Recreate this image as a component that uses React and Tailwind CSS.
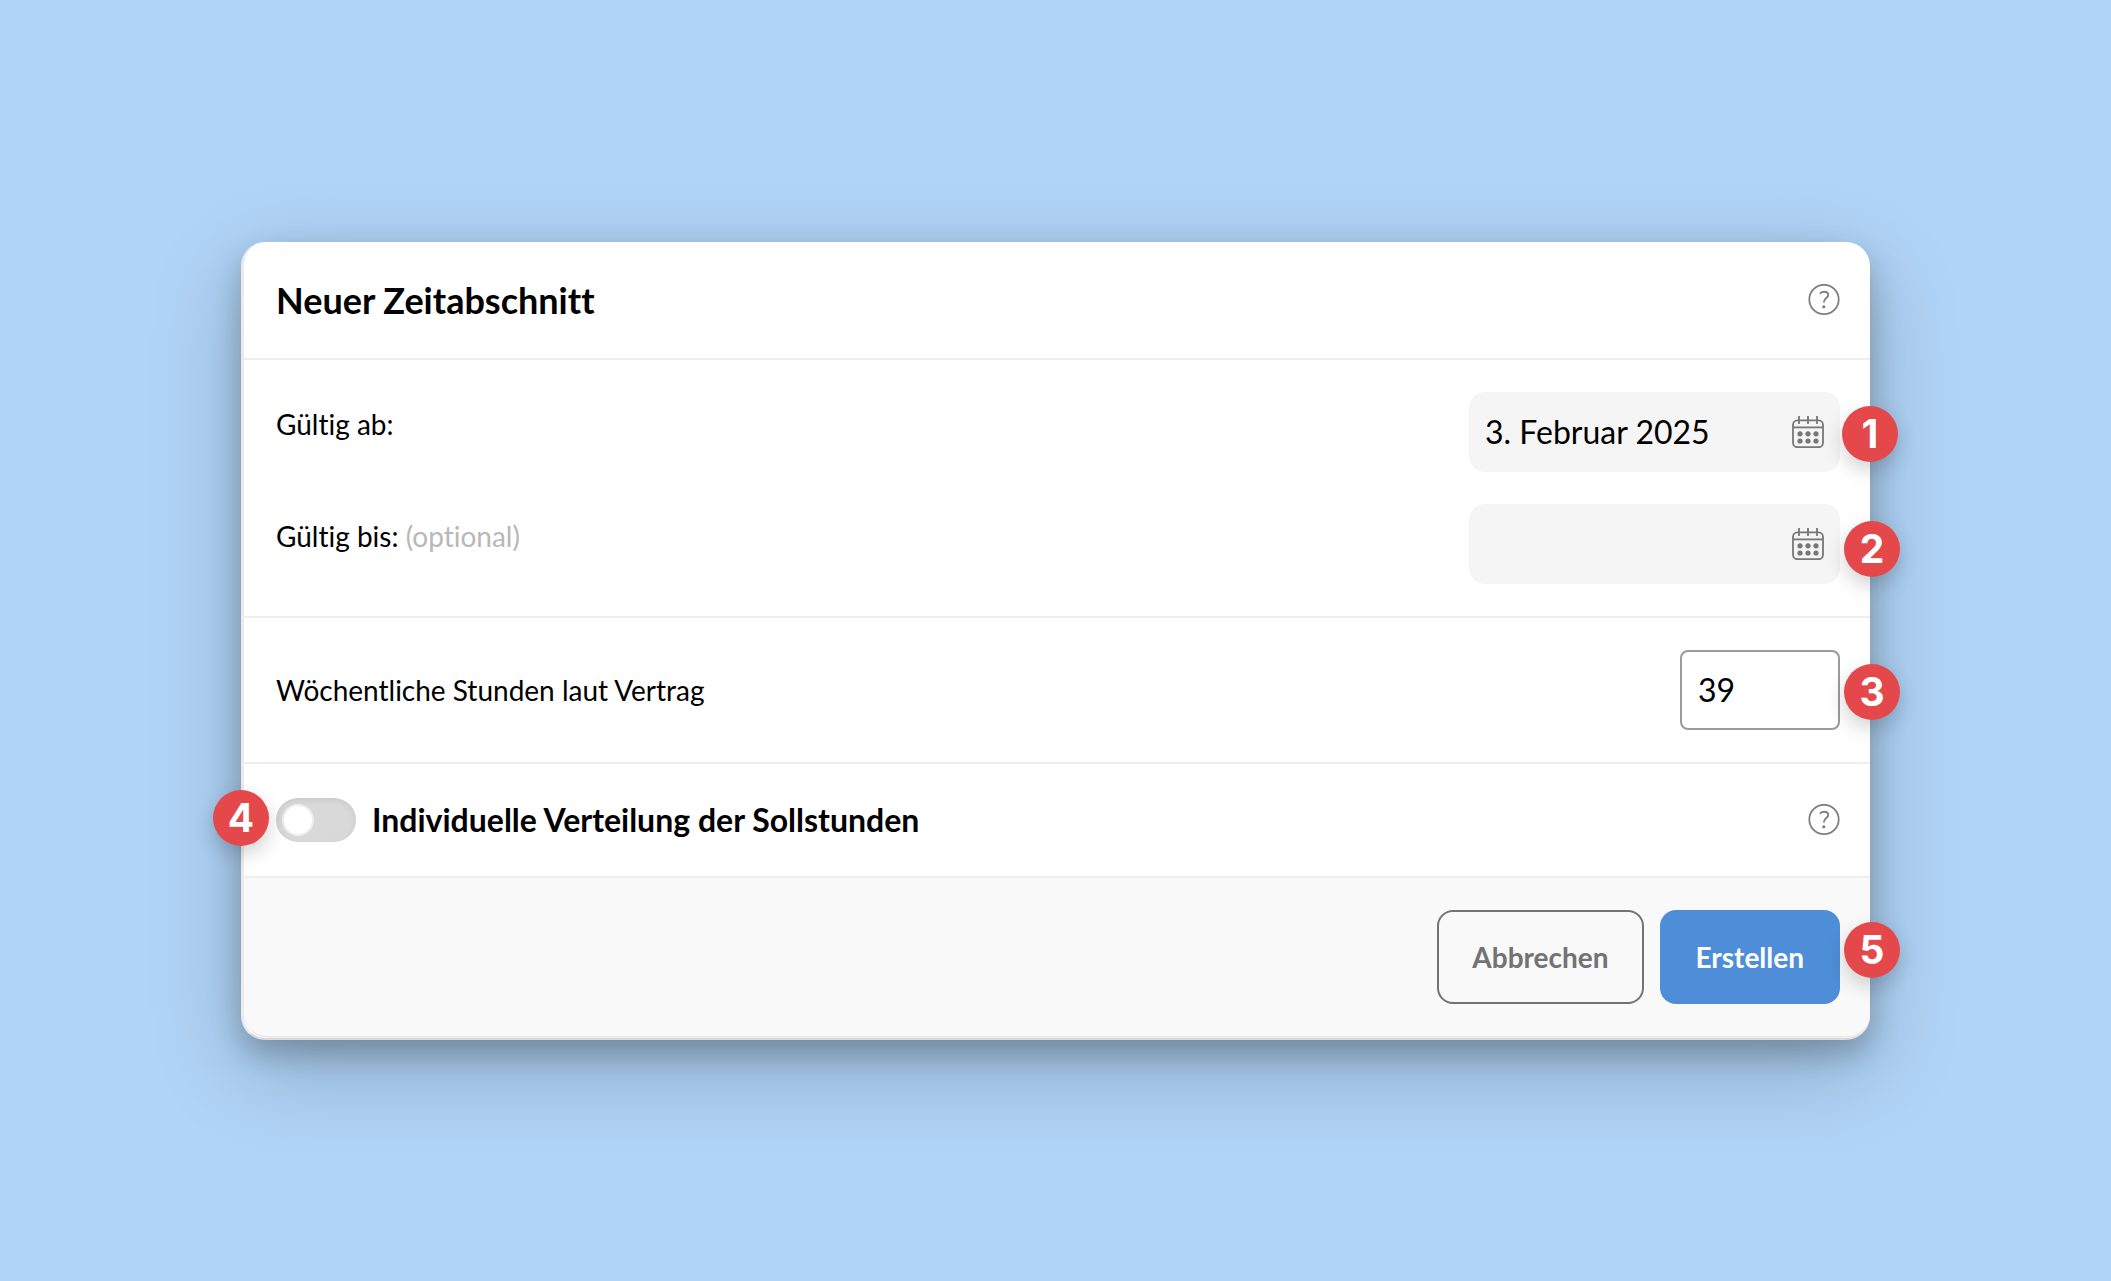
import React, { useState } from 'react';

const Badge = ({ children, className }) => (
  <span
    className={`absolute flex size-14 items-center justify-center rounded-full bg-[#e5484b] font-['Inter',sans-serif] text-[39px] leading-none font-bold text-white shadow-[0_8px_20px_rgba(0,0,0,0.18)] ${className}`}
  >
    {children}
  </span>
);

const HelpIcon = () => (
  <svg className="size-8" viewBox="0 0 32 32" fill="none" stroke="#7f7f7f" strokeLinecap="round">
    <circle cx="16" cy="15.5" r="14.7" strokeWidth="1.8" />
    <path d="M12.4 9.3c.7-1 2-1.6 3.6-1.6 2.5 0 4.2 1.2 4.2 3.3 0 3.1-4.2 3-4.2 6.8" strokeWidth="1.9" />
    <circle cx="15.8" cy="22.8" r="1.6" fill="#7f7f7f" stroke="none" />
  </svg>
);

const CalendarIcon = () => (
  <svg className="size-8" viewBox="0 0 32 32" fill="none" stroke="#777777">
    <rect x="1" y="4.4" width="30" height="26.8" rx="4.5" strokeWidth="1.8" />
    <path d="M1 11.4h30" strokeWidth="1.8" />
    <path d="M7 0v8M16 0v8M25 0v8" strokeWidth="1.8" />
    <g fill="#777777" stroke="none">
      <circle cx="8" cy="17.8" r="2.6" />
      <circle cx="16" cy="17.8" r="2.6" />
      <circle cx="24" cy="17.8" r="2.6" />
      <circle cx="8" cy="25" r="2.6" />
      <circle cx="16" cy="25" r="2.6" />
      <circle cx="24" cy="25" r="2.6" />
    </g>
  </svg>
);

const DateField = ({ id, value, onChange, children }) => (
  <div className="relative flex h-20 w-[371px] items-center rounded-2xl bg-[#f5f5f5] px-4">
    <input
      id={id}
      type="text"
      value={value}
      onChange={(e) => onChange(e.target.value)}
      className="min-w-0 flex-1 bg-transparent text-[32px] outline-none"
    />
    <button type="button" aria-label="Kalender">
      <CalendarIcon />
    </button>
    {children}
  </div>
);

const App = () => {
  const [validFrom, setValidFrom] = useState('3. Februar 2025');
  const [validTo, setValidTo] = useState('');
  const [hours, setHours] = useState('39');
  const [individual, setIndividual] = useState(false);

  return (
    <div className="flex min-h-screen items-center bg-[#b0d4f7] px-[241px] font-['Lato',sans-serif] text-[28px] text-black [font-variant-ligatures:none]">
      <form
        onSubmit={(e) => e.preventDefault()}
        className="w-full rounded-3xl border-b-2 border-l-3 border-b-[#dadada] border-l-[#ebebeb] bg-white shadow-[0_28px_90px_rgba(0,0,0,0.22),0_14px_30px_rgba(0,0,0,0.22)]"
      >
        {/* Header */}
        <div className="flex h-[118px] items-center justify-between border-b-2 border-[#eeeeee] pr-[30px] pl-8">
          <h1 className="text-4xl font-bold">Neuer Zeitabschnitt</h1>
          <button type="button" aria-label="Hilfe">
            <HelpIcon />
          </button>
        </div>

        {/* Validity period */}
        <div className="space-y-8 border-b-2 border-[#eeeeee] py-8 pr-[30px] pl-8">
          <div className="flex items-start justify-between">
            <label htmlFor="valid-from" className="leading-16">
              Gültig ab:
            </label>
            <DateField id="valid-from" value={validFrom} onChange={setValidFrom}>
              <Badge className="top-3.5 -right-[58px]">1</Badge>
            </DateField>
          </div>
          <div className="flex items-start justify-between">
            <label htmlFor="valid-to" className="leading-16">
              Gültig bis: <span className="text-[#b8b8b8]">(optional)</span>
            </label>
            <DateField id="valid-to" value={validTo} onChange={setValidTo}>
              <Badge className="top-[17px] -right-15">2</Badge>
            </DateField>
          </div>
        </div>

        {/* Weekly hours */}
        <div className="flex items-center justify-between border-b-2 border-[#eeeeee] py-8 pr-[30px] pl-8">
          <label htmlFor="hours">Wöchentliche Stunden laut Vertrag</label>
          <div className="relative">
            <input
              id="hours"
              type="text"
              inputMode="numeric"
              value={hours}
              onChange={(e) => setHours(e.target.value)}
              className="block h-20 w-40 rounded-lg border-2 border-[#9b9b9b] px-4 text-[32px] outline-none"
            />
            <Badge className="top-3.5 -right-15">3</Badge>
          </div>
        </div>

        {/* Individual distribution */}
        <div className="flex h-[114px] items-center justify-between border-b-2 border-[#eeeeee] pr-[30px] pl-8">
          <div className="relative flex items-center gap-4">
            <input
              id="individual"
              type="checkbox"
              role="switch"
              checked={individual}
              onChange={(e) => setIndividual(e.target.checked)}
              className="h-11 w-20 appearance-none rounded-full bg-[#d9d9d9] p-1.5 shadow-[inset_0_2px_6px_rgba(0,0,0,0.08)] before:block before:size-8 before:rounded-full before:border-2 before:border-[#eeeeee] before:bg-white checked:bg-[#4e8ed8] checked:before:translate-x-9"
            />
            <label htmlFor="individual" className="text-[32px] font-bold">
              Individuelle Verteilung der Sollstunden
            </label>
            <Badge className="-top-1.5 -left-[63px]">4</Badge>
          </div>
          <button type="button" aria-label="Hilfe">
            <HelpIcon />
          </button>
        </div>

        {/* Actions */}
        <div className="flex justify-end gap-4 rounded-b-3xl border-b-2 border-[#ececec] bg-[#f9f9f9] py-8 pr-[30px] pl-8">
          <button type="button" className="h-[94px] rounded-2xl border-2 border-[#737373] px-[33px] font-bold text-[#737373]">
            Abbrechen
          </button>
          <div className="relative">
            <button type="submit" className="h-[94px] rounded-2xl bg-[#4e8ed8] px-9 font-bold text-white">
              Erstellen
            </button>
            <Badge className="top-3 -right-15">5</Badge>
          </div>
        </div>
      </form>
    </div>
  );
};

export default App;
